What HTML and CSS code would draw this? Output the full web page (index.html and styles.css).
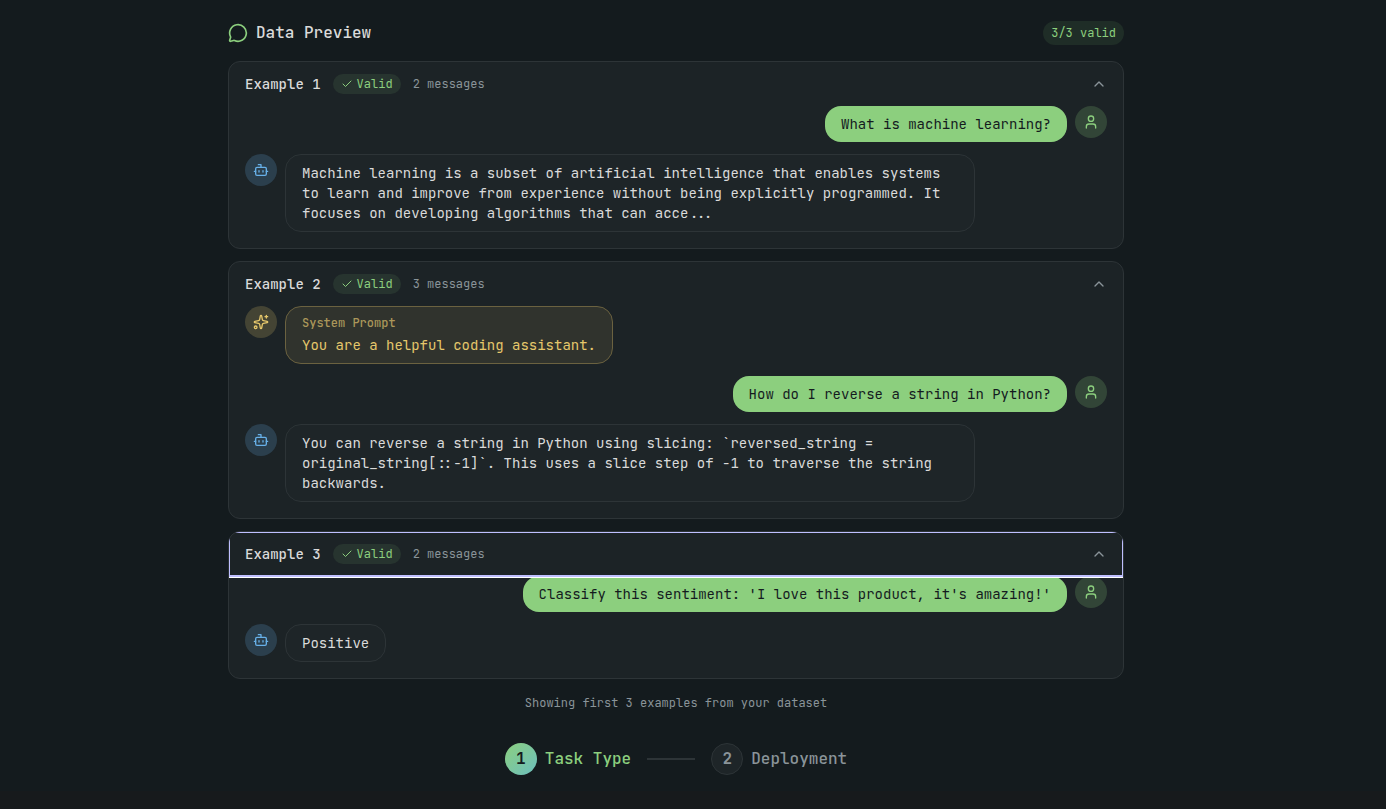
FILE: index.html
```html
<!DOCTYPE html>
<html lang="en">
<head>
  <meta charset="UTF-8">
  <meta name="viewport" content="width=device-width, initial-scale=1.0">
  <title>Data Preview</title>
  <link rel="stylesheet" href="styles.css">
</head>
<body>
  <!-- icon set -->
  <svg class="sprite" aria-hidden="true">
    <symbol id="icon-chat" viewBox="0 0 24 24"><path d="M2.992 16.342a2 2 0 0 1 .094 1.167l-1.065 3.29a1 1 0 0 0 1.236 1.168l3.413-.998a2 2 0 0 1 1.099.092 10 10 0 1 0-4.777-4.719"/></symbol>
    <symbol id="icon-check" viewBox="0 0 24 24"><path d="M20 6 9 17l-5-5"/></symbol>
    <symbol id="icon-up" viewBox="0 0 24 24"><path d="m18 15-6-6-6 6"/></symbol>
    <symbol id="icon-user" viewBox="0 0 24 24"><path d="M19 21v-2a4 4 0 0 0-4-4H9a4 4 0 0 0-4 4v2"/><circle cx="12" cy="7" r="4"/></symbol>
    <symbol id="icon-bot" viewBox="0 0 24 24"><path d="M12 8V4H8"/><rect width="16" height="12" x="4" y="8" rx="2"/><path d="M2 14h2M20 14h2M15 13v2M9 13v2"/></symbol>
    <symbol id="icon-sparkles" viewBox="0 0 24 24"><path d="M11.017 2.814a1 1 0 0 1 1.966 0l1.051 5.558a2 2 0 0 0 1.594 1.594l5.558 1.051a1 1 0 0 1 0 1.966l-5.558 1.051a2 2 0 0 0-1.594 1.594l-1.051 5.558a1 1 0 0 1-1.966 0l-1.051-5.558a2 2 0 0 0-1.594-1.594l-5.558-1.051a1 1 0 0 1 0-1.966l5.558-1.051a2 2 0 0 0 1.594-1.594z"/><path d="M20 2v4M22 4h-4"/><circle cx="4" cy="20" r="2"/></symbol>
  </svg>

  <main class="page">
    <section class="preview">
      <header class="preview-head">
        <h1 class="title"><svg class="icon icon-lg"><use href="#icon-chat"/></svg>Data Preview</h1>
        <span class="count">3/3 valid</span>
      </header>

      <div class="examples">
        <article class="card">
          <button class="card-head" type="button" aria-expanded="true">
            <span class="card-name">Example 1</span>
            <span class="valid"><svg class="icon icon-sm"><use href="#icon-check"/></svg>Valid</span>
            <span class="meta">2 messages</span>
            <svg class="icon chevron"><use href="#icon-up"/></svg>
          </button>
          <div class="messages">
            <div class="message user">
              <div class="avatar"><svg class="icon"><use href="#icon-user"/></svg></div>
              <p class="bubble">What is machine learning?</p>
            </div>
            <div class="message assistant">
              <div class="avatar"><svg class="icon"><use href="#icon-bot"/></svg></div>
              <p class="bubble">Machine learning is a subset of artificial intelligence that enables systems to learn and improve from experience without being explicitly programmed. It focuses on developing algorithms that can acce...</p>
            </div>
          </div>
        </article>

        <article class="card">
          <button class="card-head" type="button" aria-expanded="true">
            <span class="card-name">Example 2</span>
            <span class="valid"><svg class="icon icon-sm"><use href="#icon-check"/></svg>Valid</span>
            <span class="meta">3 messages</span>
            <svg class="icon chevron"><use href="#icon-up"/></svg>
          </button>
          <div class="messages">
            <div class="message system">
              <div class="avatar"><svg class="icon"><use href="#icon-sparkles"/></svg></div>
              <div class="bubble">
                <p class="role">System Prompt</p>
                <p>You are a helpful coding assistant.</p>
              </div>
            </div>
            <div class="message user">
              <div class="avatar"><svg class="icon"><use href="#icon-user"/></svg></div>
              <p class="bubble">How do I reverse a string in Python?</p>
            </div>
            <div class="message assistant">
              <div class="avatar"><svg class="icon"><use href="#icon-bot"/></svg></div>
              <p class="bubble">You can reverse a string in Python using slicing: `reversed_string = original_string[::-1]`. This uses a slice step of -1 to traverse the string backwards.</p>
            </div>
          </div>
        </article>

        <article class="card">
          <button class="card-head focused" type="button" aria-expanded="true">
            <span class="card-name">Example 3</span>
            <span class="valid"><svg class="icon icon-sm"><use href="#icon-check"/></svg>Valid</span>
            <span class="meta">2 messages</span>
            <svg class="icon chevron"><use href="#icon-up"/></svg>
          </button>
          <div class="messages">
            <div class="message user">
              <div class="avatar"><svg class="icon"><use href="#icon-user"/></svg></div>
              <p class="bubble">Classify this sentiment: 'I love this product, it's amazing!'</p>
            </div>
            <div class="message assistant">
              <div class="avatar"><svg class="icon"><use href="#icon-bot"/></svg></div>
              <p class="bubble">Positive</p>
            </div>
          </div>
        </article>
      </div>

      <p class="note">Showing first 3 examples from your dataset</p>
    </section>

    <ol class="steps">
      <li class="step active"><span class="step-num">1</span>Task Type</li>
      <li class="step-line" role="presentation"></li>
      <li class="step"><span class="step-num">2</span>Deployment</li>
    </ol>
  </main>
  <div class="page-end"></div>
</body>
</html>
```

FILE: styles.css
```css
* {
  margin: 0;
  padding: 0;
  box-sizing: border-box;
}

body {
  min-height: 100vh;
  display: flex;
  flex-direction: column;
  background: #141b1e;
  color: #dadada;
  font-family: "JetBrains Mono", "DejaVu Sans Mono", "Liberation Mono", monospace;
  font-size: 14px;
  line-height: 20px;
}

.sprite {
  display: none;
}

.icon {
  width: 16px;
  height: 16px;
  flex-shrink: 0;
  fill: none;
  stroke: currentColor;
  stroke-width: 2;
  stroke-linecap: round;
  stroke-linejoin: round;
}

.icon-lg {
  width: 20px;
  height: 20px;
}

.icon-sm {
  width: 12px;
  height: 12px;
}

.page {
  padding: 21px 34px 16px 0;
}

.page-end {
  flex: 1;
  background: #171a1c;
}

.preview {
  display: flex;
  flex-direction: column;
  gap: 16px;
  max-width: 896px;
  margin: 0 auto;
}

.preview-head {
  display: flex;
  align-items: center;
  justify-content: space-between;
}

.title {
  display: flex;
  align-items: center;
  gap: 8px;
  font-size: 16px;
  line-height: 24px;
  font-weight: 500;
}

.title .icon {
  color: #8ccf7e;
}

.count {
  padding: 4px 8px;
  border-radius: 12px;
  background: #1f2d27;
  color: #8ccf7e;
  font-size: 12px;
  line-height: 16px;
}

.examples {
  display: flex;
  flex-direction: column;
  gap: 12px;
}

.card {
  border: 1px solid #2d3437;
  border-radius: 12px;
  background: #1c2326;
  overflow: hidden;
}

.card-head {
  display: flex;
  align-items: center;
  gap: 12px;
  width: 100%;
  padding: 12px 16px;
  border: 0;
  background: none;
  color: inherit;
  font: inherit;
  cursor: pointer;
}

.card-head.focused {
  position: relative;
  z-index: 1;
  outline: 1px solid #bfbfff;
  box-shadow: inset 0 0 0 1px #bfbfff, 0 0 0 2px #fff;
}

.card-name {
  font-weight: 500;
}

.valid {
  display: flex;
  align-items: center;
  gap: 4px;
  padding: 2px 8px;
  border-radius: 10px;
  background: #27342f;
  color: #8ccf7e;
  font-size: 12px;
  line-height: 16px;
}

.meta {
  color: #8a9499;
  font-size: 12px;
  line-height: 16px;
}

.chevron {
  margin-left: auto;
  color: #8a9499;
}

.messages {
  display: flex;
  flex-direction: column;
  gap: 12px;
  padding: 0 16px 16px;
}

.message {
  display: flex;
  align-items: flex-start;
  gap: 8px;
}

.message.user {
  flex-direction: row-reverse;
}

.avatar {
  display: flex;
  align-items: center;
  justify-content: center;
  width: 32px;
  height: 32px;
  flex-shrink: 0;
  border-radius: 50%;
}

.bubble {
  max-width: 80%;
  padding: 8px 16px;
  border-radius: 16px;
}

.user .avatar {
  background: #324537;
  color: #8ccf7e;
}

.user .bubble {
  background: #8ccf7e;
  color: #141b1e;
}

.assistant .avatar {
  background: #2b3f4d;
  color: #67b0e8;
}

.assistant .bubble {
  border: 1px solid #2d3437;
  background: #1e2528;
}

.system .avatar {
  background: #444434;
  color: #e5c76b;
}

.system .bubble {
  border: 1px solid #6b6240;
  background: #30332d;
  color: #e5c76b;
}

.role {
  margin-bottom: 4px;
  color: #ab975a;
  font-size: 12px;
  line-height: 16px;
  font-weight: 500;
}

.note {
  color: #8a9499;
  font-size: 12px;
  line-height: 16px;
  text-align: center;
}

.steps {
  display: flex;
  align-items: center;
  justify-content: center;
  gap: 16px;
  margin-top: 32px;
  list-style: none;
}

.step {
  display: flex;
  align-items: center;
  gap: 8px;
  color: #8a9499;
  font-size: 16px;
  line-height: 24px;
  font-weight: 500;
}

.step-num {
  display: flex;
  align-items: center;
  justify-content: center;
  width: 32px;
  height: 32px;
  border: 1px solid #2d3437;
  border-radius: 50%;
  background: #1e2528;
  font-weight: 600;
}

.step.active {
  color: #8ccf7e;
}

.step.active .step-num {
  border: 0;
  background: linear-gradient(135deg, #8ccf7e, #6cbfbf);
  color: #141b1e;
}

.step-line {
  width: 48px;
  height: 2px;
  background: #2d3437;
}
```
